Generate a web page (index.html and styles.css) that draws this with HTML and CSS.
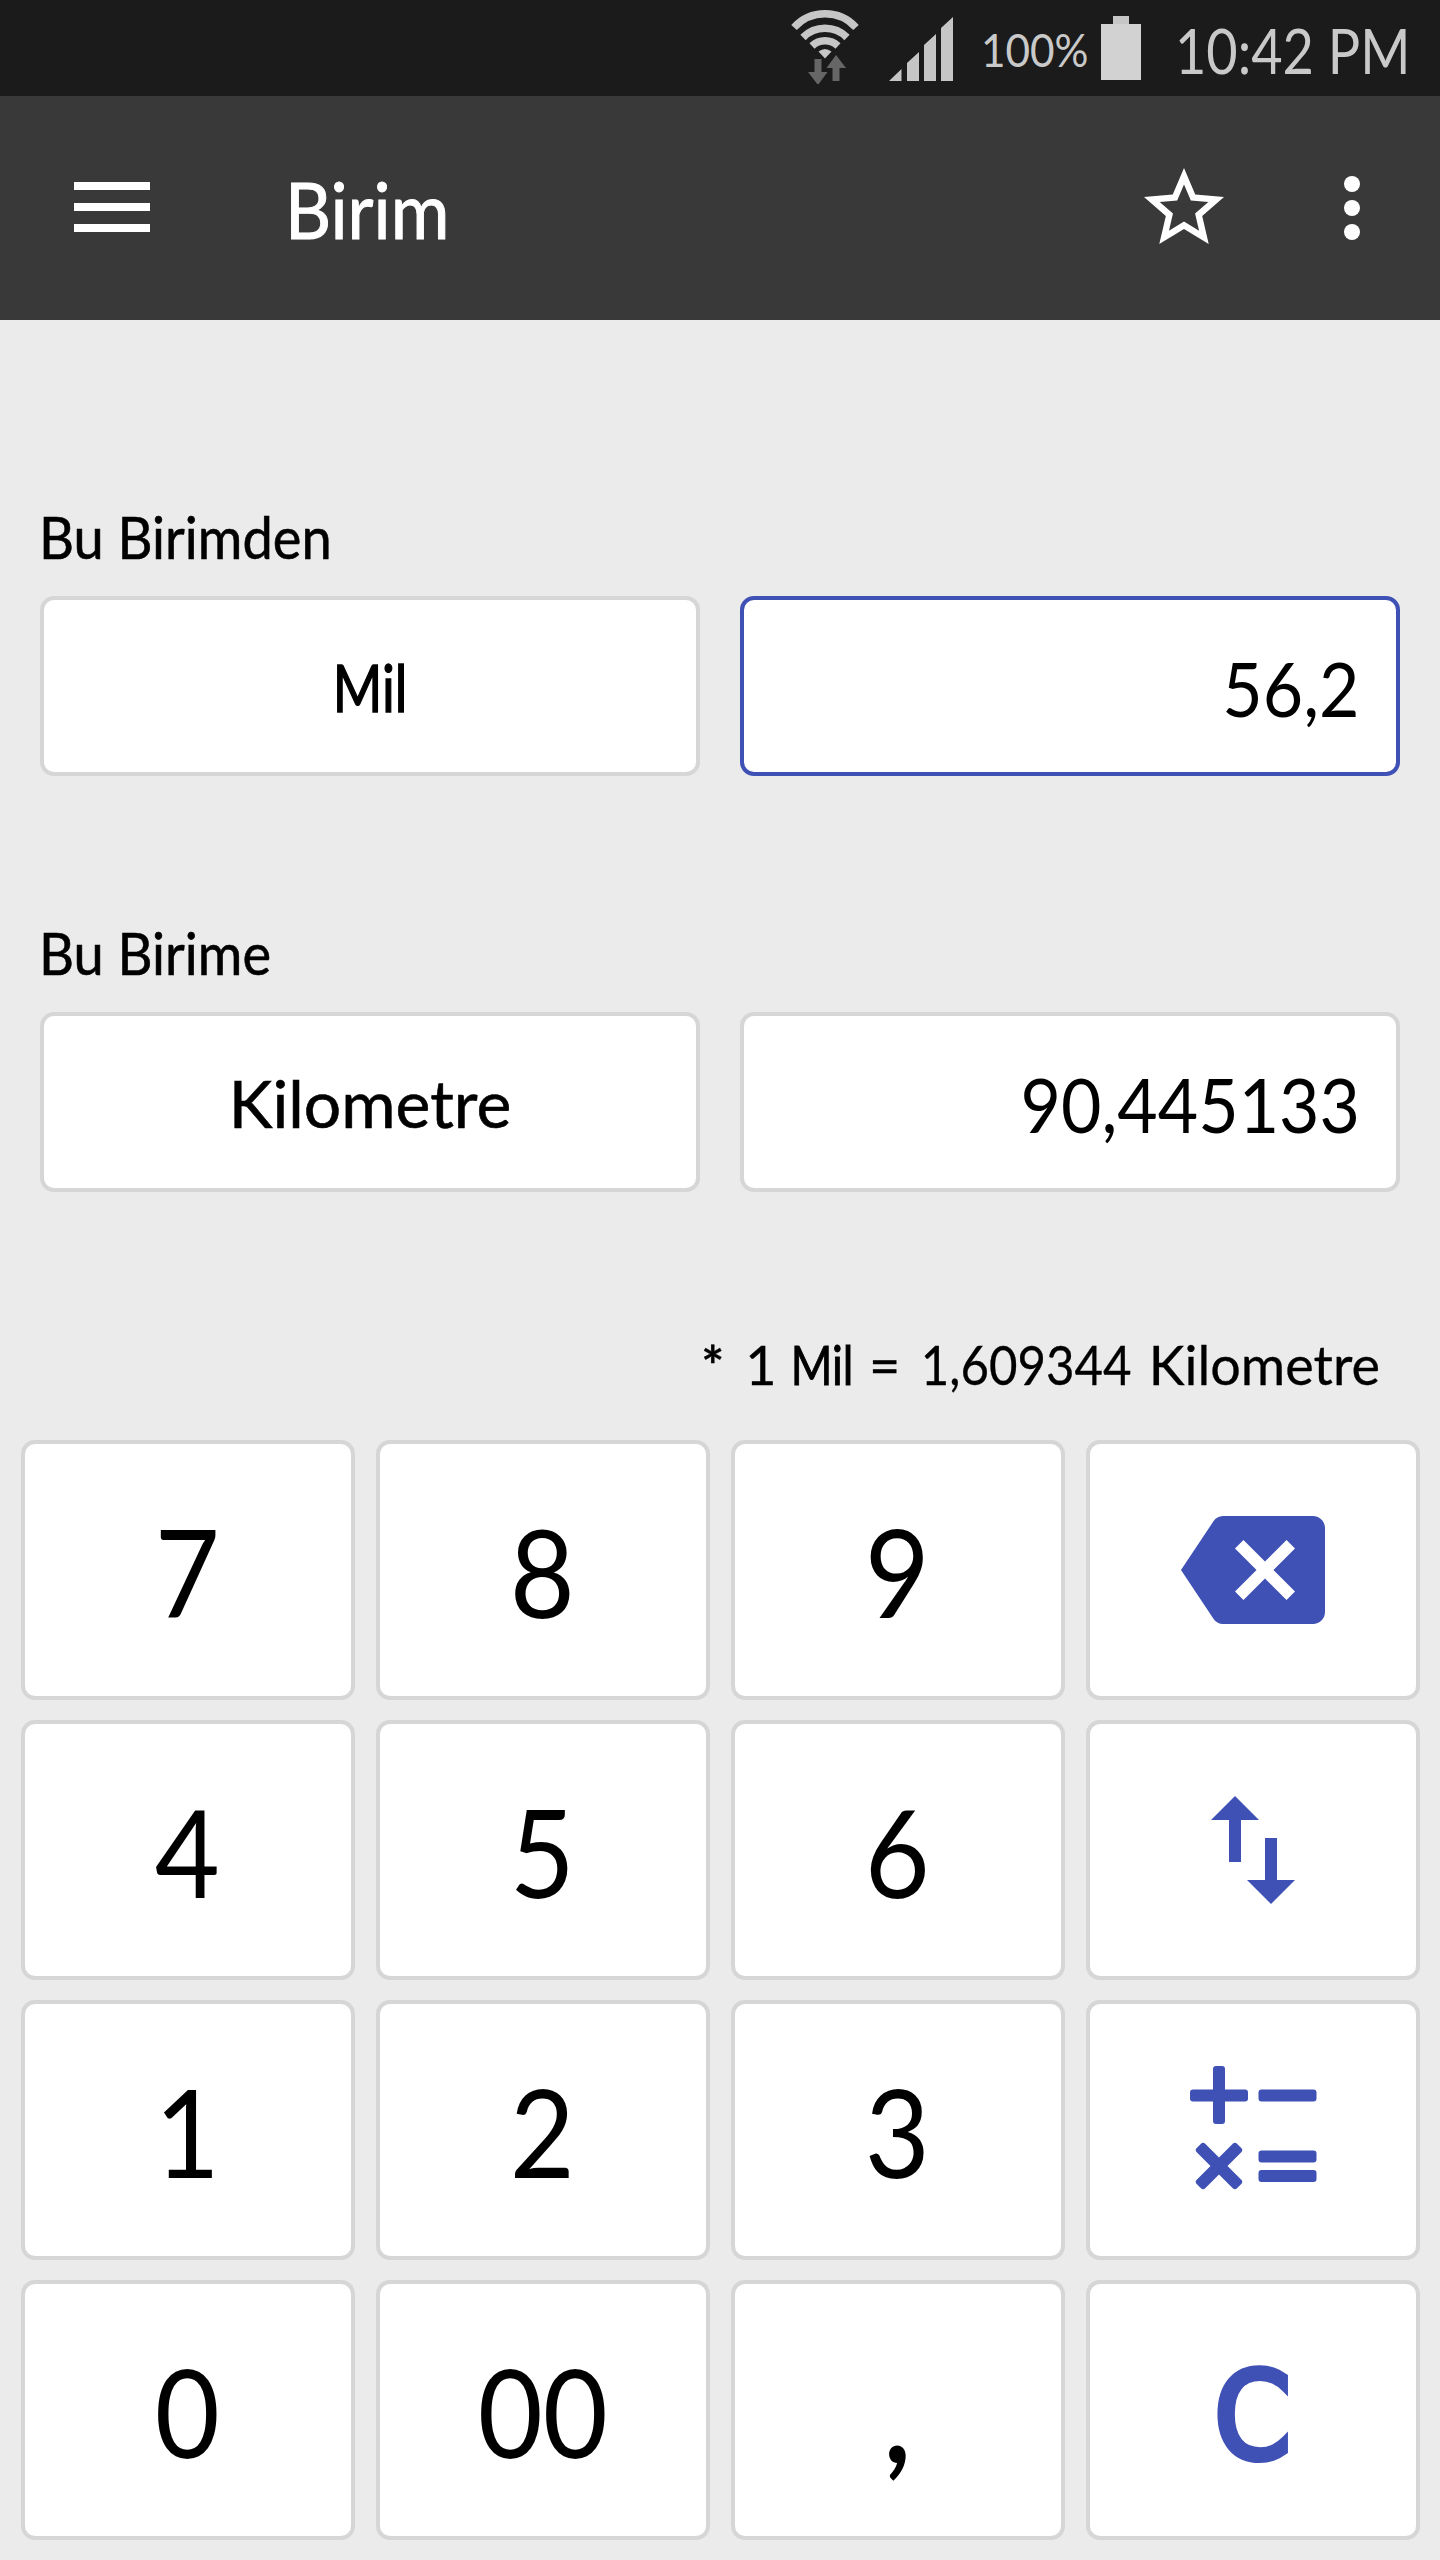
FILE: index.html
```html
<!DOCTYPE html>
<html lang="tr">
<head>
    <meta charset="UTF-8">
    <meta name="viewport" content="width=device-width, initial-scale=1.0">
    <title>Birim</title>
    <link rel="stylesheet" href="styles.css">
</head>
<body>
    <div class="status-bar">
        <svg class="wifi-icon" viewBox="0 0 68 76" width="68" height="76">
            <g fill="none" stroke="#c6c6c6" stroke-width="7.5">
                <path d="M3 19.5 A42 42 0 0 1 65 19.5"/>
                <path d="M12 29.5 A31 31 0 0 1 56 29.5"/>
                <path d="M21 38 A19 19 0 0 1 47 38"/>
            </g>
            <path d="M27.5 43.5 Q34 38.5 40.5 43.5 L34 50.5z" fill="#c6c6c6"/>
            <g fill="#666">
                <path d="M23.5 51h7v13h6L27 77 17 64h6.5z"/>
                <path d="M41.5 73h7V60h6.5L45 47l-9.5 13h6z"/>
            </g>
        </svg>
        <svg class="signal-icon" viewBox="0 0 64 64" width="64" height="64" fill="#c6c6c6">
            <path d="M0 64L12.5 52v12zM18 46L30 35v29H18zM35 28L47 17v47H35zM52 11L64 0v64H52z"/>
        </svg>
        <div class="battery-text"><span>100%</span></div>
        <svg class="battery-icon" viewBox="0 0 40 64" width="40" height="64">
            <path d="M12 0h16v9H12z" fill="#c6c6c6"/>
            <path d="M0 8h40v56H0z" fill="#d2d2d2"/>
        </svg>
        <div class="clock"><span>10:42 PM</span></div>
    </div>

    <div class="app-bar">
        <svg class="menu-icon" viewBox="0 0 76 50" width="76" height="50" fill="#fff">
            <path d="M0 0h76v8H0zM0 21h76v8H0zM0 42h76v8H0z"/>
        </svg>
        <h1 class="app-title"><span>Birim</span></h1>
        <svg class="bar-icon" viewBox="0 0 24 24" fill="#fff">
            <path d="M22 9.24l-7.19-.62L12 2 9.19 8.63 2 9.24l5.46 4.73L5.82 21 12 17.27 18.18 21l-1.63-7.03L22 9.24zM12 15.4l-3.76 2.27 1-4.28-3.32-2.88 4.38-.38L12 6.1l1.71 4.04 4.38.38-3.32 2.88 1 4.28L12 15.4z"/>
        </svg>
        <svg class="bar-icon more" viewBox="0 0 24 24" fill="#fff">
            <circle cx="12" cy="6" r="2"/>
            <circle cx="12" cy="12" r="2"/>
            <circle cx="12" cy="18" r="2"/>
        </svg>
    </div>

    <div class="converter">
        <div class="unit-group">
            <div class="unit-label"><span>Bu Birimden</span></div>
            <div class="unit-row">
                <div class="unit-box"><span class="short">Mil</span></div>
                <div class="value-box active"><span>56,2</span></div>
            </div>
        </div>
        <div class="unit-group">
            <div class="unit-label"><span>Bu Birime</span></div>
            <div class="unit-row">
                <div class="unit-box"><span>Kilometre</span></div>
                <div class="value-box"><span>90,445133</span></div>
            </div>
        </div>
        <div class="formula">
            <span class="star">*</span>
            <span class="one">1</span>
            <span class="from-unit">Mil</span>
            <span class="equals">=</span>
            <span class="rate">1,609344</span>
            <span class="to-unit">Kilometre</span>
        </div>
    </div>

    <div class="keypad">
        <div class="key"><span>7</span></div>
        <div class="key"><span>8</span></div>
        <div class="key"><span>9</span></div>
        <div class="key">
            <svg viewBox="0 0 24 24">
                <path d="M22 3H7c-.69 0-1.23.35-1.59.88L0 12l5.41 8.11c.36.53.9.89 1.59.89h15c1.1 0 2-.9 2-2V5c0-1.1-.9-2-2-2zm-3 12.59L17.59 17 14 13.41 10.41 17 9 15.59 12.59 12 9 8.41 10.41 7 14 10.59 17.59 7 19 8.41 15.41 12 19 15.59z"/>
            </svg>
        </div>
        <div class="key"><span>4</span></div>
        <div class="key"><span>5</span></div>
        <div class="key"><span>6</span></div>
        <div class="key">
            <svg viewBox="0 0 24 24">
                <path d="M9 3L5 6.99h3V14h2V6.99h3L9 3zm7 14.01V10h-2v7.01h-3L15 21l4-3.99h-3z"/>
            </svg>
        </div>
        <div class="key"><span>1</span></div>
        <div class="key"><span>2</span></div>
        <div class="key"><span>3</span></div>
        <div class="key">
            <svg viewBox="0 0 144 144">
                <rect x="9" y="31.5" width="58" height="12" rx="3"/>
                <rect x="32" y="8" width="12" height="58" rx="3"/>
                <rect x="77.5" y="31.5" width="58" height="12" rx="3"/>
                <rect x="77.5" y="92.5" width="58" height="12" rx="3"/>
                <rect x="77.5" y="112" width="58" height="12" rx="3"/>
                <rect x="9.5" y="102" width="57" height="12" rx="3" transform="rotate(45 38 108)"/>
                <rect x="9.5" y="102" width="57" height="12" rx="3" transform="rotate(-45 38 108)"/>
            </svg>
        </div>
        <div class="key"><span>0</span></div>
        <div class="key"><span>00</span></div>
        <div class="key comma"><span>,</span></div>
        <div class="key clear"><span>C</span></div>
    </div>
</body>
</html>
```

FILE: styles.css
```css
* {
    box-sizing: border-box;
}

body {
    margin: 0;
    width: 1440px;
    height: 2560px;
    overflow: hidden;
    background: #ebebeb;
    color: #000;
    font-family: Lato, sans-serif;
}

/* labels are slightly condensed */
span {
    display: inline-block;
    white-space: nowrap;
    transform-origin: left center;
}

.status-bar {
    display: flex;
    align-items: flex-start;
    height: 96px;
    padding-left: 791px;
    overflow: hidden;
    background: #1b1b1b;
    color: #c9c9c9;
}

.status-bar > * {
    flex-shrink: 0;
}

.wifi-icon {
    margin-top: 8px;
}

.signal-icon {
    margin: 17px 0 0 30px;
}

.battery-text {
    width: 148px;
    padding-left: 28px;
    font-size: 47px;
    line-height: 98px;
}

.battery-text span {
    transform: scaleX(0.9);
}

.battery-icon {
    margin-top: 16px;
}

.clock {
    margin-left: 34px;
    font-size: 62px;
    line-height: 100px;
}

.clock span {
    transform: scaleX(0.872);
}

.app-bar {
    display: flex;
    align-items: center;
    height: 224px;
    padding: 0 40px 0 74px;
    background: #393939;
}

.menu-icon {
    margin-bottom: 2px;
}

.app-title {
    flex: 1;
    margin: 0 0 0 135px;
    padding-top: 2px;
    color: #fff;
    font-size: 78px;
    font-weight: 400;
    line-height: 96px;
    -webkit-text-stroke: 1px;
}

.app-title span {
    transform: scaleX(0.915);
}

.bar-icon {
    width: 96px;
    height: 96px;
}

.more {
    margin-left: 72px;
}

.converter {
    height: 1120px;
    padding: 180px 40px 0;
}

.unit-group {
    height: 416px;
}

.unit-label {
    height: 96px;
    margin-left: -1px;
    font-size: 58px;
    line-height: 74px;
    -webkit-text-stroke: 0.6px;
}

.unit-label span {
    transform: scaleX(0.935);
}

.unit-row {
    display: grid;
    grid-template-columns: 1fr 1fr;
    gap: 40px;
}

.unit-box,
.value-box {
    display: flex;
    align-items: center;
    height: 180px;
    background: #fff;
    border: 4px solid #d6d6d6;
    border-radius: 14px;
}

.unit-box {
    justify-content: center;
    font-size: 66px;
    -webkit-text-stroke: 0.6px;
}

.unit-box .short {
    transform: scaleX(0.81);
    transform-origin: center;
    -webkit-text-stroke: 1.4px;
}

.value-box {
    justify-content: flex-end;
    padding: 3px 36px 0 0;
    font-size: 75px;
}

.value-box span {
    transform: scaleX(0.93);
    transform-origin: right center;
}

.value-box.active {
    border-color: #3f51b5;
}

.formula {
    display: flex;
    justify-content: flex-end;
    padding-right: 20px;
    font-size: 54px;
    -webkit-text-stroke: 0.3px;
}

.formula span {
    transform-origin: right center;
}

.formula .star {
    margin-right: 21px;
    font-weight: 700;
}

.formula .one {
    margin-right: 2px;
}

.formula .from-unit {
    margin-right: 15px;
    transform: scaleX(0.83);
    -webkit-text-stroke: 1px;
}

.formula .rate {
    margin-right: 17px;
    transform: scaleX(0.91);
}

.keypad {
    display: grid;
    grid-template-columns: repeat(4, 334px);
    grid-auto-rows: 260px;
    gap: 20px 21px;
    padding-left: 20.5px;
}

.key {
    display: flex;
    align-items: center;
    justify-content: center;
    background: #fff;
    border: 4px solid #d6d6d6;
    border-radius: 14px;
    font-size: 122px;
}

.key span {
    padding-top: 2px;
    transform: scaleX(0.92);
    transform-origin: center;
}

.key svg {
    width: 144px;
    height: 144px;
    fill: #3f51b5;
}

.key.comma {
    padding-top: 10px;
    font-weight: 700;
}

.key.clear {
    padding-top: 10px;
    color: #3f51b5;
    font-family: "DejaVu Sans Condensed", "DejaVu Sans", sans-serif;
    font-size: 122px;
    font-stretch: condensed;
    -webkit-text-stroke: 6px #3f51b5;
}

.key.clear span {
    transform: none;
}
```
